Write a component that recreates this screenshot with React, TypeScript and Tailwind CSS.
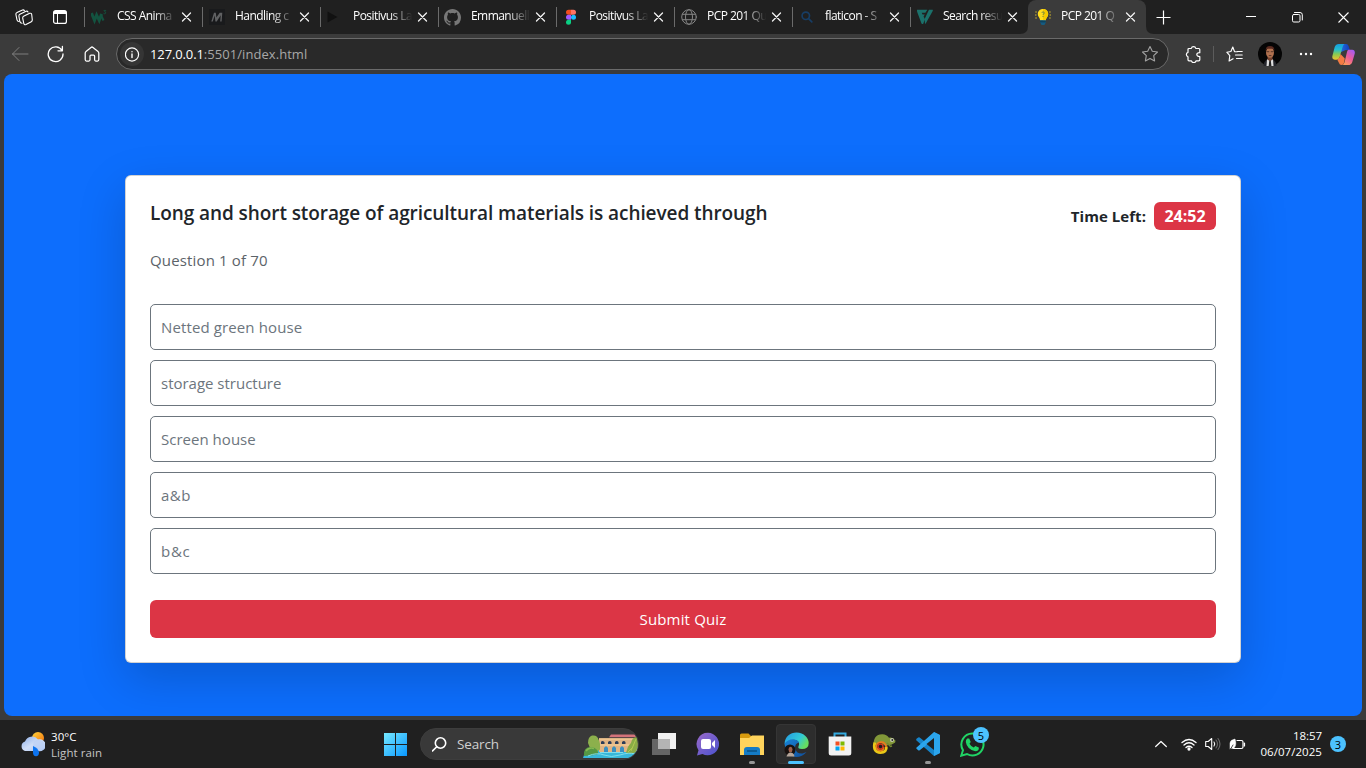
import React from "react";

const line = { fill: "none", stroke: "currentColor", strokeLinecap: "round", strokeLinejoin: "round" } as const;

const W3 = () => (
  <svg width="16" height="16" viewBox="0 0 16 16">
    <path d="M.5 4 3.500 11.500 5.600 6l2.600 5.500L10.500 5" fill="none" stroke="#135340" strokeWidth="2.900" />
    <path d="m10 5 .8 3 1.700 3.500" fill="none" stroke="#135340" strokeWidth="2.200" />
    <path d="M12.600 1.400h2.200l-1.200 1.400q1.600.2 1 1.500-.8.9-2 .1" fill="none" stroke="#135340" strokeWidth=".9" />
  </svg>
);
const MIcon = () => (
  <svg width="16" height="16" viewBox="0 0 16 16">
    <rect width="16" height="16" fill="#191a1c" />
    <path d="M2.300 12.500 5 3.800h1.800l.6 4.700 3.300-4.700h2.600l-.7 8.700h-1.400l.5-6.300-4 6.300H6.400l-.7-6-1.900 6z" fill="#606163" />
  </svg>
);
const Play = () => (
  <svg width="16" height="16" viewBox="0 0 16 16"><path d="M.5 2.500v11L10.500 8z" fill="#111" /></svg>
);
const Github = () => (
  <svg width="17" height="17" viewBox="0 0 16 16" className="-ml-px shrink-0">
    <path fill="#777" d="M8 0C3.58 0 0 3.58 0 8c0 3.54 2.29 6.53 5.47 7.59.4.07.55-.17.55-.38 0-.19-.01-.82-.01-1.49-2.01.37-2.53-.49-2.69-.94-.09-.23-.48-.94-.82-1.13-.28-.15-.68-.52-.01-.53.63-.01 1.08.58 1.23.82.72 1.21 1.87.87 2.33.66.07-.52.28-.87.51-1.07-1.78-.2-3.64-.89-3.64-3.95 0-.87.31-1.59.82-2.15-.08-.2-.36-1.02.08-2.12 0 0 .67-.21 2.2.82.64-.18 1.32-.27 2-.27s1.36.09 2 .27c1.53-1.04 2.2-.82 2.2-.82.44 1.1.16 1.92.08 2.12.51.56.82 1.27.82 2.15 0 3.07-1.87 3.75-3.65 3.95.29.25.54.73.54 1.48 0 1.07-.01 1.93-.01 2.2 0 .21.15.46.55.38A8.01 8.01 0 0 0 16 8c0-4.42-3.58-8-8-8Z" />
  </svg>
);
const Figma = () => (
  <svg width="16" height="16" viewBox="0 0 16 16">
    <path d="M5.500.8H8v5H5.500a2.500 2.500 0 0 1 0-5" fill="#f24e1e" />
    <path d="M8 .8h2.500a2.500 2.500 0 0 1 0 5H8z" fill="#ff7262" />
    <path d="M5.500 5.800H8v5H5.500a2.500 2.500 0 0 1 0-5" fill="#a259ff" />
    <circle cx="10.500" cy="8.300" r="2.500" fill="#1abcfe" />
    <path d="M5.500 10.800H8v2.500a2.500 2.500 0 1 1-2.500-2.500" fill="#0acf83" />
  </svg>
);
const Globe = () => (
  <svg width="16" height="16" viewBox="0 0 16 16" {...line} stroke="#858585">
    <circle cx="8" cy="8" r="7.300" /><ellipse cx="8" cy="8" rx="3.500" ry="7.300" /><path d="M1.500 5.300h13M1.500 10.700h13" />
  </svg>
);
const BlueSearch = () => (
  <svg width="16" height="16" viewBox="0 0 16 16" {...line} stroke="#173d64" strokeWidth="1.700">
    <circle cx="6.800" cy="6.800" r="3.700" /><path d="m9.600 9.600 3.200 3.200" />
  </svg>
);
const Flat = () => (
  <svg width="16" height="16" viewBox="0 0 17 16" fill="#1b716b">
    <path d="M.2.2h10.800L8.900 3.500H5l.9 1.800h2.400L7 7.600l1.500 2.800-2 5.100q-1.200.3-1.700-.7L.3 3Q-.3 1 .2.200" />
    <path d="M12.700.2h4.100q.2 1-.4 2l-7 12.500-.8.7-.6-4.900 1.600-3.500z" />
  </svg>
);
const Bulb = () => (
  <svg width="16" height="16" viewBox="0 0 16 16">
    <path d="M.3 3h1.500M0 6h1.500M.3 9h1.500M14.200 3h1.500M14.500 6H16M14.200 9h1.500" stroke="#d4b92c" />
    <path d="M8 0C4.800 0 2.800 2.200 2.800 5.200c0 2.700 2.300 3.500 2.300 6h5.700c0-2.500 2.400-3.300 2.400-6C13.200 2.200 11.200 0 8 0" fill="#ffdc1f" />
    <path d="M8 0v11.200h2.800c0-2.500 2.400-3.300 2.400-6C13.200 2.200 11.200 0 8 0" fill="#f3c900" />
    <path d="M5.200 11.200h5.600v2.300L9.500 16h-3l-1.300-2.500z" fill="#155b80" />
    <path d="M5.200 12.800h5.600" stroke="#0a3850" />
    <path d="M6.800 3.800q.3-.9 1.300-.9 1.300.1 1.200 1.200Q9.100 4.900 8 5.500v.6" fill="none" stroke="#5d7c50" strokeWidth=".9" /><path d="M8 7v1" stroke="#5d7c50" strokeWidth=".9" />
  </svg>
);

const tabs = [
  { t: "CSS Anima", i: <W3 /> },
  { t: "Handling c", i: <MIcon /> },
  { t: "Positivus La", i: <Play /> },
  { t: "Emmanuell", i: <Github /> },
  { t: "Positivus La", i: <Figma /> },
  { t: "PCP 201 Qu", i: <Globe /> },
  { t: "flaticon - S", i: <BlueSearch /> },
  { t: "Search resu", i: <Flat /> },
  { t: "PCP 201 Q", i: <Bulb /> },
];

const Tab = ({ t, i, active }: { t: string; i: React.ReactNode; active: boolean }) => (
  <div className={`relative flex h-[34px] w-[118px] shrink-0 items-center pl-[7px] ${active ? "rounded-t-lg bg-[#3b3b3b]" : ""}`}>
    {!active && <span className="absolute top-[7px] left-0 h-5 w-px bg-[#6b6b6b]" />}
    {active && (
      <>
        <svg className="absolute bottom-0 -left-2" width="8" height="8"><path d="M8 0v8H0q8 0 8-8" fill="#3b3b3b" /></svg>
        <svg className="absolute -right-2 bottom-0" width="8" height="8"><path d="M0 0v8h8Q0 8 0 0" fill="#3b3b3b" /></svg>
      </>
    )}
    <span className="flex h-4 w-4 shrink-0 items-center">{i}</span>
    <span className="ml-[10px] h-[18px] w-[60px] text-[12px] leading-[16px] font-medium tracking-[-0.55px] whitespace-nowrap text-white [mask-image:linear-gradient(to_right,#000_60%,transparent_99%)]">{t}</span>
    <svg className="ml-[4px] shrink-0" width="11" height="10" viewBox="0 0 11 10" {...line} stroke="#f2f2f2" strokeWidth="1.300"><path d="m1.500 1 8 8M9.500 1l-8 8" /></svg>
  </div>
);

const TabStrip = () => (
  <header className="flex h-[34px] bg-[#202020] text-white">
    <div className="flex w-[84px] items-center pl-[15px]">
      <svg width="18" height="18" viewBox="0 0 18 18" {...line} strokeWidth="1.100">
        <path d="M4 13.500q-1.600-.2-2-1.700L.9 6.500Q.7 5 2 4.500L7.500 2q1.300-.4 1.900.6" />
        <path d="M7 15.200q-1.700 0-2.200-1.700L3.900 8.200q-.2-1.400 1-2L11 3.300q1.400-.5 2 .6" />
        <path d="m8.600 8.200 6.100-2.900q1.800-.5 2 1.200l.6 5.300q.1 1.300-1 1.900l-5.300 2.800q-1.900.7-2.300-1.300l-1-5.100q-.2-1.400.9-1.900Z" />
      </svg>
      <svg className="ml-[20px]" width="14" height="14" viewBox="0 0 14 14"><rect x=".6" y=".6" width="12.800" height="12.800" rx="2" fill="none" stroke="#fff" strokeWidth="1.200" /><path d="M1 1h12v3H1z" fill="#fff" /><path d="M4.500 4v9" stroke="#fff" /></svg>
    </div>
    {tabs.map((x, n) => <Tab key={n} {...x} active={n === 8} />)}
    <div className="flex flex-1 items-center">
      <svg className="ml-[10px]" width="15" height="15" viewBox="0 0 15 15" stroke="#fff" strokeWidth="1.200"><path d="M7.500.5v14M.5 7.500h14" /></svg>
      <svg className="ml-[75px]" width="10" height="10"><path d="M0 4.500h10" stroke="#fff" /></svg>
      <svg className="ml-[36px]" width="11" height="11" viewBox="0 0 11 11" {...line}><rect x=".5" y="2.500" width="7.500" height="7.500" rx="1.300" /><path d="M2.500.5h5.500q2.300 0 2.300 2.300V8" /></svg>
      <svg className="ml-[35px]" width="11" height="11" viewBox="0 0 11 11" stroke="#fff" strokeWidth="1.100"><path d="m.5.5 10 10m0-10-10 10" /></svg>
    </div>
  </header>
);

const Copilot = () => (
  <svg width="23" height="21" viewBox="0 0 23 21">
    <defs>
      <linearGradient id="cpa" x1="0" y1="0" x2="0" y2="1"><stop stopColor="#159de0" /><stop offset=".35" stopColor="#24bcce" /><stop offset=".65" stopColor="#89c951" /><stop offset="1" stopColor="#efc02c" /></linearGradient>
      <linearGradient id="cpb" x1="0.800" y1="0" x2="0.200" y2="1"><stop stopColor="#a45bf3" /><stop offset=".5" stopColor="#ec5c99" /><stop offset="1" stopColor="#ff9b57" /></linearGradient>
      <linearGradient id="cpc"><stop stopColor="#2374e6" /><stop offset="1" stopColor="#153bb7" /></linearGradient>
    </defs>
    <path d="M7 0h7q2 0 2.600 2l1.300 4h-4.200L9 8z" fill="url(#cpc)" />
    <path d="M6.800 0h5.600q-1.200 1-1.800 3L7.700 13q-.7 2.700-3.200 2.700H2.800Q-.4 15.700.4 12L2.700 3Q3.800 0 6.800 0" fill="url(#cpa)" />
    <path d="M16.200 5.700h4q3.200.3 2.500 4l-2.500 8.500q-1 2.800-4 2.800h-5.600q1.500-.8 2-3L15 8q.3-1.600 1.200-2.300" fill="url(#cpb)" />
    <path d="M5.200 15.600q1.800-.3 2.500-2.700L8.500 10l4.300 4.500-.7 4Q11.500 21 9.500 21q-2 0-2.500-2z" fill="#f37b43" />
  </svg>
);

const Toolbar = () => (
  <div className="flex h-10 items-center bg-[#3b3b3b] text-white">
    <svg className="ml-[11px]" width="18" height="16" viewBox="0 0 18 16" {...line} stroke="#7e7e7e"><path d="M17 8H1.500M8 1.500 1.500 8 8 14.500" /></svg>
    <svg className="ml-[18px]" width="17" height="18" viewBox="0 0 17 18" {...line} strokeWidth="1.300"><path d="M15 5.500A7.400 7.400 0 1 0 16 9M15.400 1.500v4.300H11" /></svg>
    <svg className="ml-[20px]" width="16" height="16" viewBox="0 0 16 16" {...line} strokeWidth="1.250"><path d="M1.200 7.200Q1.200 6.200 2 5.600L7 1.400q1-.8 2 0l5 4.200q.8.600.8 1.600v6.300q0 1.500-1.300 1.500h-1.700q-1.200 0-1.200-1.200V10q0-1-1-1H7q-1 0-1 1v3.800Q6 15 4.800 15H2.500q-1.300 0-1.300-1.500z" /></svg>
    <div className="ml-[16px] flex h-8 w-[1053px] items-center rounded-full border border-[#6a6a6a] bg-[#292929] pl-[3px]">
      <span className="flex h-6 w-6 items-center justify-center rounded-full bg-[#353535]">
        <svg width="15" height="15" viewBox="0 0 15 15" {...line} strokeWidth="1.200"><circle cx="7" cy="7.500" r="6.600" /><path d="M7 7v3.500M7 4.600v.1" strokeWidth="1.400" /></svg>
      </span>
      <span className="ml-[6px] text-[13px] leading-5 whitespace-pre text-[#a8a8a8]"><span className="font-medium tracking-[-0.12px] text-white">127.0.0.1</span><span className="tracking-[0.06px]">:5501/index.html</span></span>
      <svg className="mr-[9px] ml-auto" width="18" height="18" viewBox="0 0 18 18" {...line} stroke="#a2a2a2" strokeWidth="1.100"><path d="m9 1.500 2.300 4.700 5.200.8-3.800 3.700.9 5.200L9 13.500l-4.600 2.400.9-5.200L1.500 7l5.200-.8z" /></svg>
    </div>
    <svg className="ml-[16px]" width="17" height="17" viewBox="0 0 17 17" {...line} strokeWidth="1.200"><path d="M4 2.500h2.300a2.300 2.300 0 0 1 4.500 0h3q1 0 1 1v3.200q-3 0-3 1.900t3 1.900v3.300q0 1-1 1h-2.800a2.300 2.300 0 0 1-4.500 0H4q-1 0-1-1v-3a2.300 2.300 0 0 1 0-4.400v-3q0-.9 1-.9" /></svg>
    <span className="ml-[11px] h-4 w-px bg-[#5c5c5c]" />
    <svg className="ml-[12px]" width="17" height="17" viewBox="0 0 17 17" {...line} strokeWidth="1.150"><path d="m11 5.800-2.500-.2L6.800 1 4.900 5.500.8 6.200l3 3.400-.7 5.400 4-2.200M11.500 5.500h4.700M9.500 9h6.700M10.500 12.500h5.700" /></svg>
    <svg className="ml-[15px]" width="24" height="24" viewBox="0 0 24 24">
      <circle cx="12" cy="12" r="12" fill="#050505" /><path d="M5.500 24q0-5 4-6.500h5q4 1.500 4 6.500" fill="#25262c" />
      <path d="m9 17 3 2 3-2 .5 7h-7z" fill="#ddd" /><path d="M11.300 18.500h1.500l.6 5.500h-2.700z" fill="#222" /><path d="M9.500 14h5v3.500L12 19l-2.500-1.500z" fill="#75432f" />
      <ellipse cx="12" cy="10.500" rx="4" ry="5.300" fill="#b0714f" /><path d="M7.800 9Q7.200 4 12 4q5 .2 4.200 5l-1-2.200H8.700z" fill="#5a2a20" /><path d="M8.500 9.700h2.700m1.600 0h2.700M10.800 13.600h2.600" stroke="#40271f" strokeWidth=".8" />
    </svg>
    <svg className="ml-[17px]" width="14" height="4" fill="#fff"><circle cx="2" cy="2" r="1.200" /><circle cx="7" cy="2" r="1.200" /><circle cx="12" cy="2" r="1.200" /></svg>
    <span className="ml-[19px]"><Copilot /></span>
  </div>
);

const options = [
  { text: "Netted green house", tracking: "tracking-[0.12px]" },
  { text: "storage structure", tracking: "tracking-[-0.01px]" },
  { text: "Screen house", tracking: "tracking-[0.02px]" },
  { text: "a&b", tracking: "tracking-[0.5px]" },
  { text: "b&c", tracking: "tracking-[0.7px]" },
];

const Quiz = () => (
  <main className="h-[646px] bg-[#3b3b3b] px-1 pb-1">
    <div className="flex h-[642px] items-start justify-center overflow-hidden rounded-lg bg-[#0d6efd] pt-[101px]">
      <section className="w-[1116px] rounded-md border border-black/[.175] bg-white p-6 text-[15px] shadow-[0_16px_48px_rgba(0,0,0,.175)]">
        <div className="flex justify-between">
          <h1 className="mt-px text-[19px] leading-6 font-semibold tracking-[-0.08px] whitespace-nowrap text-[#212529]">Long and short storage of agricultural materials is achieved through</h1>
          <div className="mt-[2px] flex h-7 items-center font-bold text-[#212529]">
            <span className="tracking-[0.05px]">Time Left:</span>
            <span className="ml-2 flex h-7 w-[62px] items-center justify-center rounded-md bg-[#dc3545] text-[16px] text-white">24:52</span>
          </div>
        </div>
        <p className="mt-[18px] h-6 leading-6 tracking-[0.15px] text-[#5c6369]">Question 1 of 70</p>
        <div className="mt-[32px] flex flex-col gap-[10px]">
          {options.map((o) => (
            <button key={o.text} className={`flex h-[46px] items-center rounded-[5px] border border-[#6c757d] pl-[10px] text-[#6c757d] ${o.tracking}`}>{o.text}</button>
          ))}
        </div>
        <button className="mt-[26px] flex h-[38px] w-full items-center justify-center rounded-md bg-[#dc3545] tracking-[0.15px] text-white">Submit Quiz</button>
      </section>
    </div>
  </main>
);

const Weather = () => (
  <svg width="25" height="25" viewBox="0 0 25 25">
    <defs><linearGradient id="cl" x2="1" y2="1"><stop stopColor="#8dafe8" /><stop offset=".5" stopColor="#d0def7" /><stop offset="1" stopColor="#a8c4f5" /></linearGradient><linearGradient id="sn" x2="1" y2="1"><stop stopColor="#ffd43c" /><stop offset="1" stopColor="#f36f0b" /></linearGradient></defs>
    <circle cx="18" cy="6" r="6" fill="url(#sn)" />
    <path d="M5 19a5 5 0 0 1 0-9.500 7.500 7.500 0 0 1 13-2A6 6 0 1 1 18 19z" fill="url(#cl)" />
    <circle cx="18.500" cy="13" r="5.500" fill="#bcd0f5" opacity=".7" /><path d="M13 14q5 2 6 6.200 0 4-3 4t-3-4z" fill="#0d74f1" />
  </svg>
);

const SearchScene = () => (
  <svg width="55" height="24" viewBox="0 0 55 24">
    <path d="M0 24q2-8 12-8h40l3-3-1 5q-3 6-8 6z" fill="#38b8da" />
    <path d="M16 4.500h36q3 4 2.500 10L53 18H16z" fill="#e0b485" /><path d="M28 .5h24l1 2.800H26z" fill="#d4737a" /><path d="M16 5h37M17 11h37" stroke="#f2c891" strokeWidth="1.400" />
    <path d="M18 10V8q1-2 3.500 0v2zm7 0V8q2-2 3.500 0v2zm7 0V8q2-2 3.500 0v2zm7 0V8q2-2 3.500 0v2z" fill="#2c3c58" />
    <path d="M21 18v-4q2-3.500 4 0v4m4 0v-4q2-3.500 4 0v4m4 0v-4q2-3.500 4 0v4" fill="#3a8fc0" />
    <path d="M5 9Q5 3 9 1.600q5-1 6.500 4 2 3 1.500 10-6 5-9 1z" fill="#8cb04c" /><path d="M1 22q-1-9 7-9 7 1 7.500 7-7 2-14.500 2" fill="#559744" /><path d="M3 17q3-4 8-2.500" stroke="#86b851" strokeWidth="1.500" fill="none" />
    <path d="M43 19q2-8 5-10 1-6 6-6 2 9-1 15-4 3-10 1" fill="#8aab46" /><path d="m48 17 5-12M45 18l4-4" stroke="#b1c951" strokeWidth="1" />
    <path d="M5 22q9-4 16-1t16 0 15-1M17 18.500h23" stroke="#7fdcec" fill="none" />
  </svg>
);

const Teams = () => (
  <svg width="24" height="24" viewBox="0 0 24 24"><defs><linearGradient id="tm" x2="1" y2="1"><stop stopColor="#9a69c8" /><stop offset="1" stopColor="#4a52cf" /></linearGradient></defs><path d="M12 .7A11.300 11.300 0 1 1 6.500 22L1 23.500l1.500-5.200A11.300 11.300 0 0 1 12 .7" fill="url(#tm)" /><rect x="5" y="7" width="10" height="10" rx="2" fill="#fff" /><path d="m16 11 3-3v8l-3-3z" fill="#fff" /></svg>
);
const Folder = () => (
  <svg width="24" height="24" viewBox="0 0 24 24"><path d="M0 3q0-1.500 1.500-1.500h7L11 4h12v7H0z" fill="#d89b0e" /><path d="M0 6h9l3-2.500h12V23H0z" fill="#ffd45c" /><path d="M4 23v-5q0-3 3-3h10q3 0 3 3v5z" fill="#147bc5" /><path d="M7 19h10" stroke="#095183" strokeWidth="1.500" /></svg>
);
const Edge = () => (
  <svg width="25" height="25" viewBox="0 0 25 25">
    <defs><linearGradient id="ea" y2=".5"><stop stopColor="#2499e6" /><stop offset=".65" stopColor="#31c9d6" /><stop offset="1" stopColor="#66dd60" /></linearGradient><linearGradient id="eb" y2="1"><stop stopColor="#1883d7" /><stop offset="1" stopColor="#104d99" /></linearGradient></defs>
    <path d="M.5 12C1 4.500 6 .5 12.500.5 20 .5 24.700 6 24.700 11q0 6-6.700 6-5 0-3.300-3.300c1.500-3-1.200-6.200-5-6Q4 8 .5 12" fill="url(#ea)" />
    <path d="M.5 12q3.500-5 9-4.600 4 .2 5.500 3-4 .8-4 5.600 1 6 7.500 5.500l4-1.500q-4 5-10.500 5Q2 24 .5 12" fill="url(#eb)" />
    <circle cx="6" cy="18" r="5.500" fill="#18110f" /><ellipse cx="6.500" cy="17.500" rx="2" ry="2.700" fill="#9c604b" /><path d="M2.500 24.500q1-3.500 3.500-4 4 0 4.500 4" fill="#b5a69a" />
  </svg>
);
const Store = () => (
  <svg width="24" height="24" viewBox="0 0 24 24"><path d="M6.500 6V1.500h11V6" fill="none" stroke="#32a9df" strokeWidth="2" /><path d="M.7 4.500h22.600V21q0 2.500-2.500 2.500H3.200Q.7 23.500.7 21z" fill="#f2f2f2" /><path d="M7.500 9.500h4v4h-4z" fill="#f25022" /><path d="M12.500 9.500h4v4h-4z" fill="#7fba00" /><path d="M7.500 14.500h4v4h-4z" fill="#00a4ef" /><path d="M12.500 14.500h4v4h-4z" fill="#ffb900" /></svg>
);
const Chameleon = () => (
  <svg width="24" height="22" viewBox="0 0 24 22">
    <path d="M1.500 13Q1 1.500 10 1.200q4.500-.2 7 3.500 4-.8 6.500 3 .3 2.300-2 2.800-2 1.500-5 1.500l-3 1-6-4-5 3.500z" fill="#819738" />
    <path d="m15 10 3.500 3.500 1.500-.5" stroke="#74872e" strokeWidth="1.500" fill="none" />
    <path d="M2.800 9.500Q.5 19 8.500 19.600q6.500-.5 5.800-5.800" fill="none" stroke="#eac817" strokeWidth="2.800" />
    <path d="M14.300 14Q13 8.600 8.500 9.200q-4.500.8-4 5 .8 3.500 4.300 3.300 3.200-.5 2.700-3.500" fill="none" stroke="#e97a1d" strokeWidth="1.800" />
    <circle cx="8.500" cy="13.500" r="2.500" fill="#1c1c1c" stroke="#cf361f" strokeWidth="1.400" />
    <circle cx="20" cy="7" r="2" fill="#c5c7b2" /><circle cx="20.300" cy="7" r=".9" fill="#292929" />
  </svg>
);
const Code = () => (
  <svg width="24" height="24" viewBox="0 0 24 24"><path d="m18 0 6 3v18l-6 3L.5 8.500q-.8-1 .3-2L2.200 5.500q.8-.5 1.500.1L18 17z" fill="#1684ca" /><path d="m18 0 6 3v18l-6 3V7L3.700 18.300q-.8.600-1.500 0L.8 17q-1-.8-.2-1.600z" fill="#2ba5ed" /><path d="m10.500 12 7.500-6v12z" fill="#202020" /></svg>
);
const WhatsApp = () => (
  <svg width="25" height="25" viewBox="0 0 25 25"><path d="M12.500 1.500A11 11 0 1 1 7 22L1.200 23.700 3 18.200a11 11 0 0 1 9.500-16.700" fill="none" stroke="#20d565" strokeWidth="2" /><path d="M7.200 6.500h2l1.500 3.500-1.200 1.700q1.400 2.700 4.300 3.800l1.500-1.500 3.500 1.500q.5 3.500-3.500 3.700Q7 17.500 5.800 10q-.1-2.500 1.400-3.500" fill="#20d565" /></svg>
);

const TaskIcon = ({ children, dot, active }: { children: React.ReactNode; dot?: boolean; active?: boolean }) => (
  <div className={`relative flex h-10 w-10 shrink-0 items-center justify-center rounded ${active ? "border border-[#353535] bg-[#2d2d2d]" : ""}`}>
    {children}
    {dot && <span className="absolute bottom-0 left-[17px] h-[3px] w-[6px] rounded-full bg-[#969696]" />}
    {active && <span className="absolute -bottom-px left-[11px] h-[3px] w-4 rounded-full bg-[#4cc2ff]" />}
  </div>
);

const Taskbar = () => (
  <footer className="flex h-12 items-center bg-[#202020] text-white">
    <div className="flex w-[384px] items-center pl-5">
      <Weather />
      <div className="mt-px ml-[6px] text-[11.500px] leading-4"><div className="tracking-[0.05px]">30°C</div><div className="tracking-[0.08px] text-[#c4c4c4]">Light rain</div></div>
    </div>
    <svg width="23" height="23" viewBox="0 0 23 23"><defs><linearGradient id="win" gradientUnits="userSpaceOnUse" x2="23" y2="23"><stop stopColor="#76e9ff" /><stop offset="1" stopColor="#0897ff" /></linearGradient></defs><path d="M0 0h11v11H0zM12 0h11v11H12zM0 12h11v11H0zM12 12h11v11H12z" fill="url(#win)" /></svg>
    <div className="ml-[13px] flex h-8 w-[219px] items-center overflow-hidden rounded-full border border-[#3d3d3d] bg-[#393939] pl-[11px]">
      <svg width="15" height="15" viewBox="0 0 15 15" {...line} strokeWidth="1.600"><circle cx="8.500" cy="6" r="5.200" /><path d="m4.500 10-4 4" /></svg>
      <span className="ml-[10px] text-[13.500px] leading-5 tracking-[-0.15px] text-[#d0d0d0]">Search</span>
      <span className="mt-[4px] mr-0 ml-auto"><SearchScene /></span>
    </div>
    <div className="ml-[5px] flex items-center gap-1">
      <TaskIcon><svg width="24" height="22" viewBox="0 0 24 22"><path d="M6 0h18v16H6z" fill="#f1f1f1" /><path d="M0 6h18v16H0z" fill="#777" opacity=".8" /><path d="M6 6h12v10H6z" fill="#b4b4b4" /></svg></TaskIcon>
      <TaskIcon><Teams /></TaskIcon>
      <TaskIcon dot><Folder /></TaskIcon>
      <TaskIcon active><Edge /></TaskIcon>
      <TaskIcon><Store /></TaskIcon>
      <TaskIcon><Chameleon /></TaskIcon>
      <TaskIcon dot><Code /></TaskIcon>
      <TaskIcon><WhatsApp /><span className="absolute top-[3px] left-[21px] flex h-4 w-4 items-center justify-center rounded-full bg-[#4cc2ff] text-[11px] leading-none text-black">5</span></TaskIcon>
    </div>
    <div className="ml-auto flex items-center pr-[20px]">
      <svg width="12" height="8" viewBox="0 0 12 8" {...line} strokeWidth="1.200"><path d="m.7 6.500 5.300-5 5.300 5" /></svg>
      <svg className="ml-[14px]" width="16" height="13" viewBox="0 0 16 13" {...line} strokeWidth="1.300"><path d="M1 4.500q7-6 14 0M3 7q5-4.500 10 0M5 9.500q3-2.600 6 0" /><circle cx="8" cy="11" r="1" fill="#fff" /></svg>
      <svg className="ml-[8px]" width="16" height="14" viewBox="0 0 16 14" {...line} strokeWidth="1.100"><path d="M.7 4.500h2.500L6.700 1.500v11L3.200 9.500H.7zM9 5q1.500 2 0 4" /><path d="M11 3q3 4 0 8M13 1.500q4 5.500 0 11" stroke="#686868" /></svg>
      <svg className="ml-[8px]" width="17" height="13" viewBox="0 0 17 13" {...line} strokeWidth="1.200"><path d="M8 2.500h4.500q1.500 0 1.500 1.500v5q0 1.500-1.500 1.500H4.500M15.500 5v3" /><path d="M1 11V5q0-3 5-4 2 6-1 9-2 1-3.500 0" fill="#fff" strokeWidth=".5" /><path d="m1 12 3-5" stroke="#202020" strokeWidth=".8" /></svg>
      <div className="ml-[14px] w-[62px] text-[11.500px] leading-4 whitespace-nowrap"><div className="text-right tracking-[-0.05px]">18:57</div><div className="flex justify-end tracking-[0.05px]">06/07/2025</div></div>
      <span className="ml-[8px] flex h-4 w-4 items-center justify-center rounded-full bg-[#4cc2ff] text-[11px] leading-none text-black">3</span>
    </div>
  </footer>
);

export default function App() {
  return (
    <div className="h-[768px] w-[1366px] overflow-hidden bg-[#3b3b3b] font-['Open_Sans','Noto_Sans',sans-serif]">
      <TabStrip />
      <Toolbar />
      <Quiz />
      <Taskbar />
    </div>
  );
}
